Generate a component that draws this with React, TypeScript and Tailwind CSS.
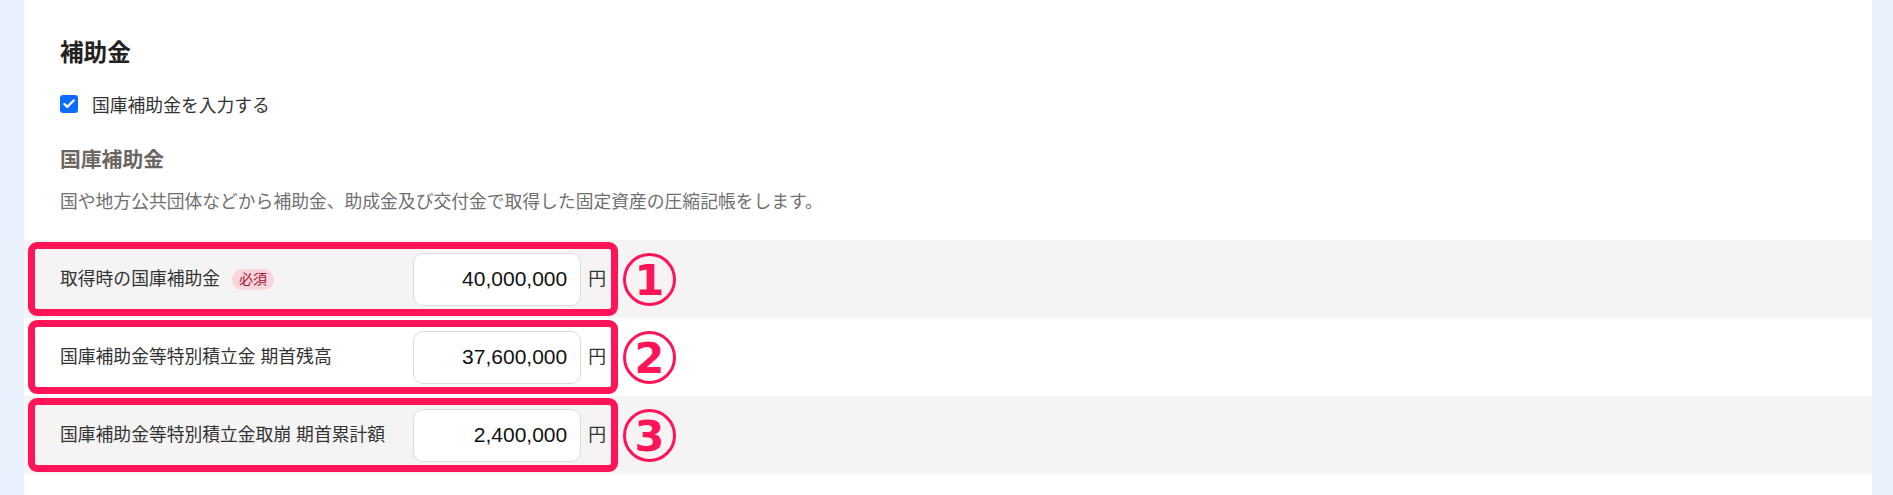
import { Check } from 'lucide-react';

type Field = {
  label: string;
  value: string;
  required?: boolean;
  mark: string;
  shaded: boolean;
};

const fields: Field[] = [
  { label: '取得時の国庫補助金', value: '40,000,000', required: true, mark: '1', shaded: true },
  { label: '国庫補助金等特別積立金 期首残高', value: '37,600,000', mark: '2', shaded: false },
  { label: '国庫補助金等特別積立金取崩 期首累計額', value: '2,400,000', mark: '3', shaded: true },
];

const jp = "font-['Liberation_Sans','Noto_Sans_CJK_JP',sans-serif]";

const FieldRow = ({ field }: { field: Field }) => (
  <div
    className={`flex items-center h-[78px] pl-[4px] ${field.shaded ? 'bg-[#f5f3f4]' : 'bg-white'}`}
  >
    {/* highlighted field */}
    <div className="flex items-center w-[590px] h-[74px] border-[7px] border-[#ff1458] rounded-[9px] pl-[25px] pr-[5px]">
      <div className="flex-1 flex items-center gap-[12px]">
        <span className="text-[17.8px] leading-[26px] text-[#333]">{field.label}</span>
        {field.required && (
          <span className="h-[21px] px-[7px] rounded-full bg-[#fbd5dc] text-[#a3122f] text-[14px] leading-[21px]">
            必須
          </span>
        )}
      </div>
      <div className="w-[168px] h-[53px] rounded-[10px] border border-[#dcdcdc] bg-white flex items-center justify-end pr-[13px]">
        <span className="font-['Liberation_Sans',sans-serif] text-[21px] text-[#111]">{field.value}</span>
      </div>
      <span className="ml-[7px] text-[17.8px] text-[#333]">円</span>
    </div>
    <div className="ml-[5px] w-[53px] h-[53px] rounded-full border-[3px] border-[#ff1458] flex items-center justify-center">
      <span className="font-['DejaVu_Sans',sans-serif] font-bold text-[43px] leading-none text-[#ff1458] mt-[2px]">
        {field.mark}
      </span>
    </div>
  </div>
);

export default function App() {
  return (
    <div className={`w-full h-[495px] bg-[#e9f1fd] pl-[24px] pr-[21px] ${jp}`}>
      <div className="h-full bg-white pt-[37px]">
        <h2 className="pl-[36px] text-[23.6px] leading-[32px] font-bold text-[#222]">補助金</h2>

        <label className="mt-[25px] pl-[36px] flex items-center h-[24px]">
          <span className="w-[18px] h-[18px] rounded-[3px] bg-[#0b6cff] flex items-center justify-center -mt-[4px]">
            <Check className="w-[14px] h-[14px] text-white" strokeWidth={4} />
          </span>
          <span className="ml-[14px] text-[17.8px] leading-[24px] text-[#333]">国庫補助金を入力する</span>
        </label>

        <h3 className="mt-[28px] pl-[36px] text-[20.8px] leading-[28px] font-bold text-[#6b6661]">国庫補助金</h3>
        <p className="mt-[15px] pl-[36px] text-[17.8px] leading-[26px] text-[#707070]">
          国や地方公共団体などから補助金、助成金及び交付金で取得した固定資産の圧縮記帳をします。
        </p>

        <div className="mt-[25px]">
          {fields.map((f) => (
            <FieldRow key={f.mark} field={f} />
          ))}
        </div>
      </div>
    </div>
  );
}
